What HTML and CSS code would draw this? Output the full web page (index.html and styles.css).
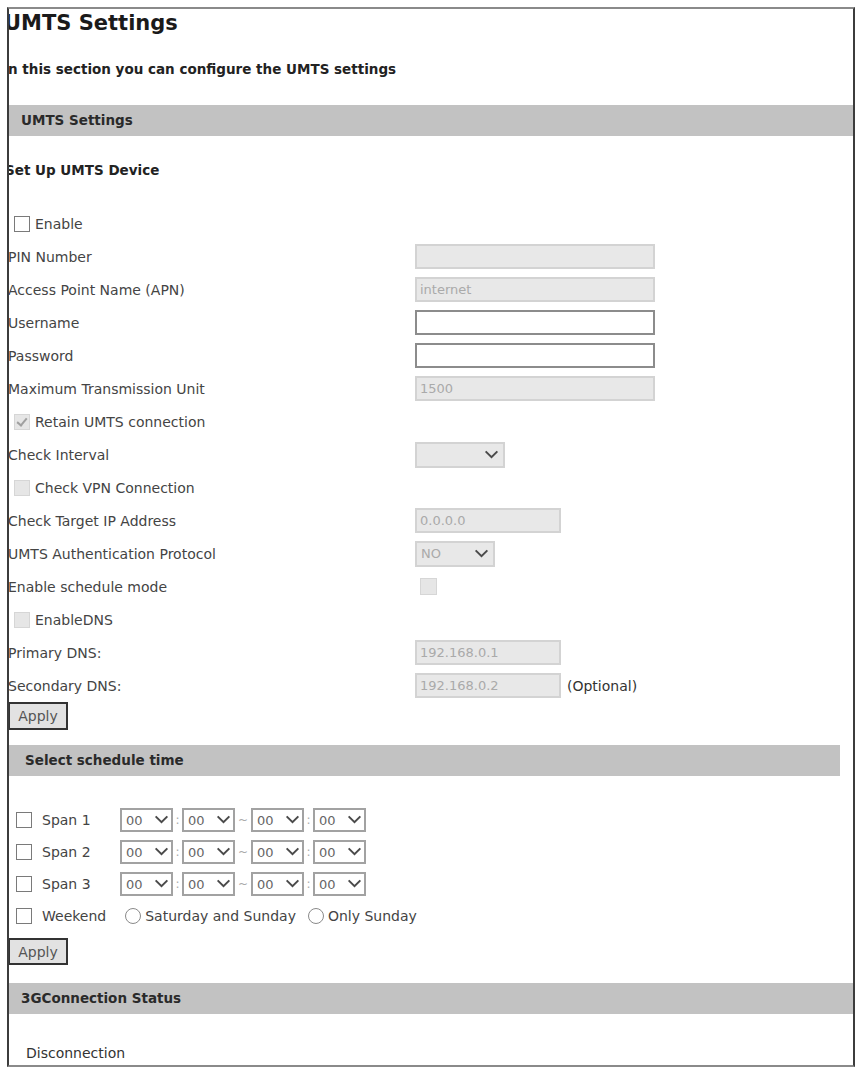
FILE: index.html
```html
<!DOCTYPE html>
<html lang="en">
<head>
    <meta charset="utf-8">
    <title>UMTS Settings</title>
    <link rel="stylesheet" href="styles.css">
</head>
<body>

<div class="umts-page">
    <h1>UMTS Settings</h1>
    <p class="intro">In this section you can configure the UMTS settings</p>

    <div class="bar">UMTS Settings</div>
    <h3 class="device-title">Set Up UMTS Device</h3>

    <form class="settings" action="#">
        <div class="row check-row">
            <input type="checkbox" class="chk" id="enable">
            <label for="enable">Enable</label>
        </div>
        <div class="row">
            <span class="label">PIN Number</span>
            <input type="text" class="txt" disabled value="">
        </div>
        <div class="row">
            <span class="label">Access Point Name (APN)</span>
            <input type="text" class="txt" disabled value="internet">
        </div>
        <div class="row">
            <span class="label">Username</span>
            <input type="text" class="txt txt-active" value="">
        </div>
        <div class="row">
            <span class="label">Password</span>
            <input type="password" class="txt txt-active" value="">
        </div>
        <div class="row">
            <span class="label">Maximum Transmission Unit</span>
            <input type="text" class="txt" disabled value="1500">
        </div>
        <div class="row check-row">
            <input type="checkbox" class="chk" id="retain" checked disabled>
            <label for="retain">Retain UMTS connection</label>
        </div>
        <div class="row">
            <span class="label">Check Interval</span>
            <span class="sel">
                <select class="sel-interval" disabled><option></option></select>
                <svg class="chev" viewBox="0 0 16 10"><path d="M1.5 1.5 8 8 14.5 1.5"/></svg>
            </span>
        </div>
        <div class="row check-row">
            <input type="checkbox" class="chk" id="vpn" disabled>
            <label for="vpn">Check VPN Connection</label>
        </div>
        <div class="row">
            <span class="label">Check Target IP Address</span>
            <input type="text" class="txt txt-medium" disabled value="0.0.0.0">
        </div>
        <div class="row">
            <span class="label">UMTS Authentication Protocol</span>
            <span class="sel">
                <select class="sel-auth" disabled><option>NO</option></select>
                <svg class="chev" viewBox="0 0 16 10"><path d="M1.5 1.5 8 8 14.5 1.5"/></svg>
            </span>
        </div>
        <div class="row">
            <span class="label">Enable schedule mode</span>
            <input type="checkbox" class="chk chk-field" disabled>
        </div>
        <div class="row check-row">
            <input type="checkbox" class="chk" id="dns" disabled>
            <label for="dns">EnableDNS</label>
        </div>
        <div class="row">
            <span class="label">Primary DNS:</span>
            <input type="text" class="txt txt-medium" disabled value="192.168.0.1">
        </div>
        <div class="row">
            <span class="label">Secondary DNS:</span>
            <input type="text" class="txt txt-medium" disabled value="192.168.0.2">
            <span class="optional">(Optional)</span>
        </div>
        <button type="button" class="apply">Apply</button>
    </form>

    <div class="bar bar-short">Select schedule time</div>

    <form class="schedule" action="#">
        <div class="span-row">
            <input type="checkbox" class="chk">
            <span class="span-label">Span 1</span>
            <span class="sel"><select class="sel-time"><option>00</option></select><svg class="chev" viewBox="0 0 16 10"><path d="M1.5 1.5 8 8 14.5 1.5"/></svg></span>
            <span class="sep">:</span>
            <span class="sel"><select class="sel-time"><option>00</option></select><svg class="chev" viewBox="0 0 16 10"><path d="M1.5 1.5 8 8 14.5 1.5"/></svg></span>
            <span class="sep sep-wide">~</span>
            <span class="sel"><select class="sel-time"><option>00</option></select><svg class="chev" viewBox="0 0 16 10"><path d="M1.5 1.5 8 8 14.5 1.5"/></svg></span>
            <span class="sep">:</span>
            <span class="sel"><select class="sel-time"><option>00</option></select><svg class="chev" viewBox="0 0 16 10"><path d="M1.5 1.5 8 8 14.5 1.5"/></svg></span>
        </div>
        <div class="span-row">
            <input type="checkbox" class="chk">
            <span class="span-label">Span 2</span>
            <span class="sel"><select class="sel-time"><option>00</option></select><svg class="chev" viewBox="0 0 16 10"><path d="M1.5 1.5 8 8 14.5 1.5"/></svg></span>
            <span class="sep">:</span>
            <span class="sel"><select class="sel-time"><option>00</option></select><svg class="chev" viewBox="0 0 16 10"><path d="M1.5 1.5 8 8 14.5 1.5"/></svg></span>
            <span class="sep sep-wide">~</span>
            <span class="sel"><select class="sel-time"><option>00</option></select><svg class="chev" viewBox="0 0 16 10"><path d="M1.5 1.5 8 8 14.5 1.5"/></svg></span>
            <span class="sep">:</span>
            <span class="sel"><select class="sel-time"><option>00</option></select><svg class="chev" viewBox="0 0 16 10"><path d="M1.5 1.5 8 8 14.5 1.5"/></svg></span>
        </div>
        <div class="span-row">
            <input type="checkbox" class="chk">
            <span class="span-label">Span 3</span>
            <span class="sel"><select class="sel-time"><option>00</option></select><svg class="chev" viewBox="0 0 16 10"><path d="M1.5 1.5 8 8 14.5 1.5"/></svg></span>
            <span class="sep">:</span>
            <span class="sel"><select class="sel-time"><option>00</option></select><svg class="chev" viewBox="0 0 16 10"><path d="M1.5 1.5 8 8 14.5 1.5"/></svg></span>
            <span class="sep sep-wide">~</span>
            <span class="sel"><select class="sel-time"><option>00</option></select><svg class="chev" viewBox="0 0 16 10"><path d="M1.5 1.5 8 8 14.5 1.5"/></svg></span>
            <span class="sep">:</span>
            <span class="sel"><select class="sel-time"><option>00</option></select><svg class="chev" viewBox="0 0 16 10"><path d="M1.5 1.5 8 8 14.5 1.5"/></svg></span>
        </div>
        <div class="span-row">
            <input type="checkbox" class="chk">
            <span class="span-label span-label-auto">Weekend</span>
            <input type="radio" class="radio radio-first" name="weekend">
            <span class="radio-text">Saturday and Sunday</span>
            <input type="radio" class="radio" name="weekend">
            <span class="radio-text">Only Sunday</span>
        </div>
        <button type="button" class="apply apply-schedule">Apply</button>
    </form>

    <div class="bar bar-status">3GConnection Status</div>
    <p class="status">Disconnection</p>
</div>

</body>
</html>
```

FILE: styles.css
```css
body {
    margin:0;
    padding:7px 0 0 7px;
    background:#fff;
    color:#444;
    font-family:"DejaVu Sans",Verdana,sans-serif;
}

/* outer frame, content starts a few px under the left edge */
.umts-page {
    width:848px;
    height:1060px;
    box-sizing:border-box;
    border:2px solid #3c3c3c;
    border-top-color:#8a8a8a;
    border-bottom-color:#8a8a8a;
    overflow:hidden;
}

h1 {
    margin:2px 0 0 -5px;
    font-size:21px;
    line-height:24px;
    font-weight:bold;
    color:#1a1a1a;
}

.intro {
    margin:26px 0 0 -6px;
    font-size:13.5px;
    line-height:16px;
    font-weight:bold;
    color:#222;
}

.bar {
    height:31px;
    line-height:31px;
    margin-top:28px;
    padding-left:12px;
    background:#c2c2c2;
    font-size:13.5px;
    font-weight:bold;
    color:#2a2a2a;
}

.bar-short {
    width:831px;
    box-sizing:border-box;
    margin-top:15px;
    padding-left:16px;
}

.bar-status {
    margin-top:18px;
}

.device-title {
    margin:26px 0 0 -4px;
    font-size:13.5px;
    line-height:16px;
    font-weight:bold;
    color:#222;
}

/* settings rows */
.settings {
    margin:29px 0 0;
}

.row {
    display:flex;
    align-items:center;
    height:33px;
    font-size:14px;
    line-height:16px;
}

.row .label {
    flex:none;
    width:407px;
    margin-left:-1px;
}

.check-row {
    padding-left:5px;
}

.check-row label {
    margin-left:5px;
}

.txt {
    width:240px;
    height:25px;
    box-sizing:border-box;
    margin:0;
    padding:0 3px;
    border:2px solid #d3d3d3;
    background:#e8e8e8;
    color:#aaa;
    font:13px "DejaVu Sans",Verdana,sans-serif;
    outline:0;
}

.txt:disabled {
    color:#aaa;
    background:#e8e8e8;
    opacity:1;
}

.txt-active {
    border-color:#8c8c8c;
    background:#fff;
}

.txt-medium {
    width:146px;
}

.optional {
    margin-left:6px;
    color:#333;
}

/* checkboxes and radios */
.chk, .radio {
    -webkit-appearance:none;
    appearance:none;
    flex:none;
    position:relative;
    width:16px;
    height:16px;
    margin:0;
    box-sizing:border-box;
    border:1px solid #7a7a7a;
    background:#fff;
}

.chk:disabled {
    border-color:#d6d6d6;
    background:#e6e6e6;
}

.chk:checked::before {
    content:"";
    position:absolute;
    left:4px;
    top:1px;
    width:4px;
    height:8px;
    border:solid #a0a0a0;
    border-width:0 2px 2px 0;
    transform:rotate(40deg);
}

.chk-field {
    margin-left:5px;
    width:17px;
    height:17px;
}

.radio {
    border-radius:50%;
    border-color:#8a8a8a;
}

/* selects with drawn arrow */
.sel {
    position:relative;
    display:inline-block;
    flex:none;
}

.sel select {
    -webkit-appearance:none;
    appearance:none;
    display:block;
    margin:0;
    padding:0 4px;
    box-sizing:border-box;
    font:13px "DejaVu Sans",Verdana,sans-serif;
    outline:0;
    opacity:1;
}

.sel-interval, .sel-auth {
    height:26px;
    border:2px solid #d3d3d3;
    background:#e8e8e8;
    color:#aaa;
}

.sel select:disabled {
    color:#aaa;
    opacity:1;
}

.sel-interval {
    width:90px;
}

.sel-auth {
    width:80px;
}

.chev {
    position:absolute;
    right:6px;
    top:50%;
    width:15px;
    height:9px;
    margin-top:-5px;
    pointer-events:none;
}

.chev path {
    fill:none;
    stroke:#4a4a4a;
    stroke-width:2.2;
}

.apply {
    display:block;
    width:60px;
    height:28px;
    margin:0 0 0 -1px;
    padding:0;
    border:2px solid #333;
    background:#e2e2e2;
    color:#555;
    font:14px "DejaVu Sans",Verdana,sans-serif;
}

/* schedule */
.schedule {
    margin:28px 0 0;
}

.span-row {
    display:flex;
    align-items:center;
    height:32px;
    font-size:14px;
    line-height:16px;
}

.span-row .chk {
    margin-left:7px;
}

.span-label {
    width:78px;
    margin-left:10px;
}

.span-label-auto {
    width:auto;
}

.sel-time {
    width:53px;
    height:24px;
    border:2px solid #a2a2a2;
    background:#fff;
    color:#666;
}

.sel-time + .chev {
    right:4px;
}

.sep {
    width:9px;
    text-align:center;
    color:#aaa;
    font-size:12px;
}

.sep-wide {
    width:16px;
}

.radio-first {
    margin-left:19px;
}

.radio + .radio-text {
    margin-left:4px;
    margin-right:12px;
}

.apply-schedule {
    height:27px;
    margin-top:6px;
}

.status {
    margin:31px 0 0 17px;
    font-size:14px;
    line-height:16px;
    color:#333;
}
```
